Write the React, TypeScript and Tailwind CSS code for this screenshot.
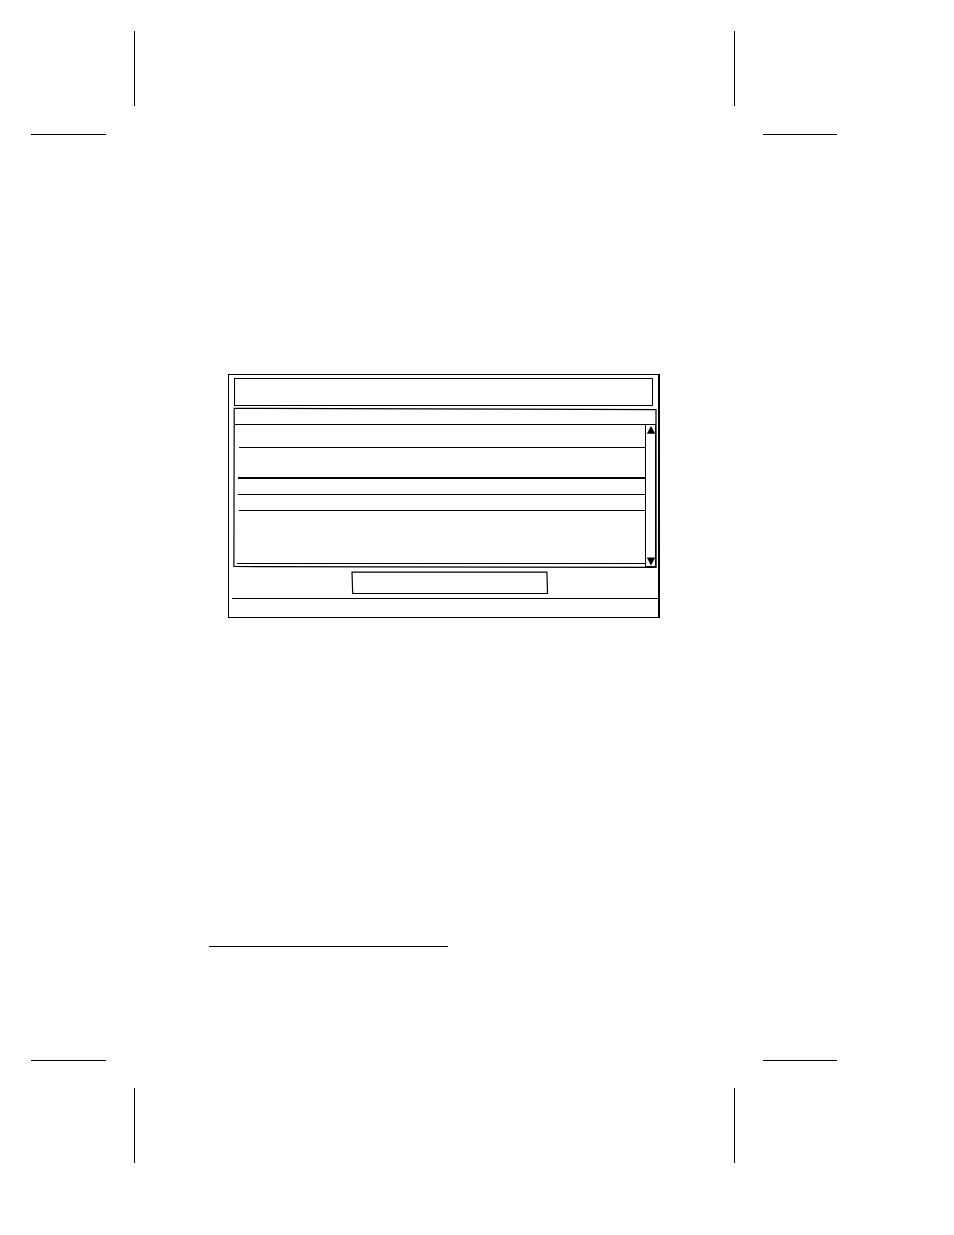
interface OutlineProps {
  viewBox: string;
  d: string;
}

interface ArrowButtonProps {
  label: string;
  d: string;
}

const rows = [
  { id: 1, className: "ml-1 h-[23px] border-b" },
  { id: 2, className: "ml-[3px] h-[31px] border-b-2" },
  { id: 3, className: "ml-[3px] h-4 border-b" },
  { id: 4, className: "ml-1 h-4 border-b" },
  { id: 5, className: "ml-0.5 h-[53px] border-b" },
];

// Slightly uneven pen stroke drawn around a box
function Outline({ viewBox, d }: OutlineProps) {
  return (
    <svg
      aria-hidden="true"
      viewBox={viewBox}
      preserveAspectRatio="none"
      className="pointer-events-none absolute inset-0 h-full w-full overflow-visible"
    >
      <path d={d} fill="none" stroke="black" strokeWidth="1.2" />
    </svg>
  );
}

function ArrowButton({ label, d }: ArrowButtonProps) {
  return (
    <button type="button" aria-label={label} className="block h-[9px] w-[9px]">
      <svg viewBox="0 0 9 9" className="block h-[9px] w-[9px]">
        <path d={d} fill="black" />
      </svg>
    </button>
  );
}

function VerticalMarks() {
  return (
    <div className="ml-[103px] mr-[102px] flex h-[75px] justify-between">
      <div className="w-px bg-black" />
      <div className="w-px bg-black" />
    </div>
  );
}

function HorizontalMarks() {
  return (
    <div className="flex h-px justify-between">
      <div className="w-[75px] bg-black" />
      <div className="w-[74px] bg-black" />
    </div>
  );
}

function ListPanel() {
  return (
    <section className="relative ml-1 mr-px mt-0.5 pt-4">
      <Outline viewBox="0 0 424 160" d="M1.2 0.4L423 1.6L423.1 159.4L0.9 158.5Z" />
      <div className="ml-0.5 mr-px flex border-t border-black">
        <ul className="flex-1 pb-1">
          {rows.map((row) => (
            <li key={row.id} className={`border-black ${row.className}`} />
          ))}
        </ul>
        <div className="flex w-[11px] flex-col justify-between border-x border-b-2 border-black">
          <ArrowButton label="Scroll up" d="M5 1L9.2 8.7H0.8Z" />
          <ArrowButton label="Scroll down" d="M0.8 0.6H9.2L5 8.6Z" />
        </div>
      </div>
    </section>
  );
}

export default function App() {
  return (
    <div className="bg-white pb-[72px] pl-[31px] pr-[117px] pt-[31px]">
      <div className="flex flex-col gap-7">
        <VerticalMarks />
        <HorizontalMarks />
      </div>

      <main className="pt-[239px]">
        <div className="ml-[197px] mr-[177px] border border-r-2 border-black">
          <header className="mx-[5px] mt-[3px] h-7 border border-black" />
          <ListPanel />
          <div className="pb-1 pl-[122px] pr-[110px] pt-[3px]">
            <button type="button" aria-label="Confirm" className="relative block h-[23px] w-full">
              <Outline viewBox="0 0 197 23" d="M1 1.1H195.9L196.5 22.5H1.7Z" />
            </button>
          </div>
          <footer className="ml-[3px] h-[19px] border-t border-black" />
        </div>
        <hr className="ml-[178px] mt-[328px] w-[239px] border-t border-black" />
      </main>

      <div className="mt-[113px] flex flex-col gap-[27px]">
        <HorizontalMarks />
        <VerticalMarks />
      </div>
    </div>
  );
}
